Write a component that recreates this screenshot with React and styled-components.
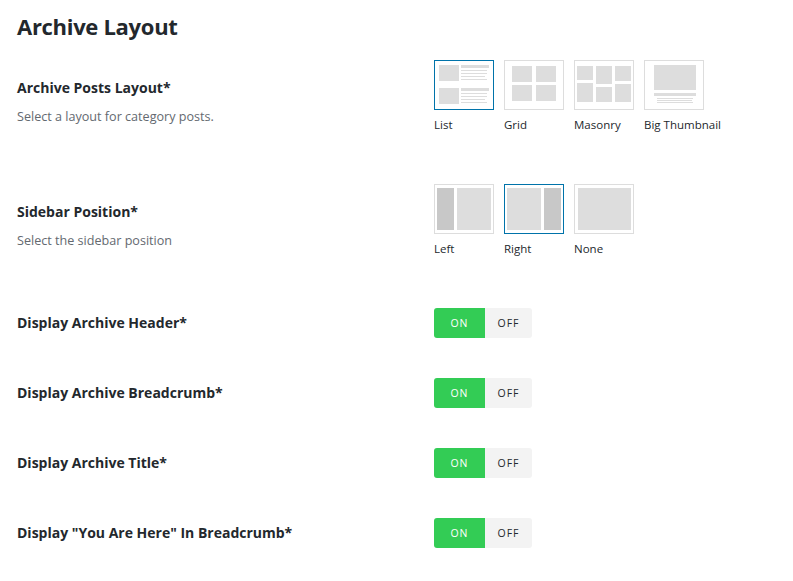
import React from 'react'
import styled, { createGlobalStyle } from 'styled-components'

const GlobalStyle = createGlobalStyle`
  body {
    margin: 0;
    background: #fff;
    font-family: "Open Sans", "Noto Sans", "Liberation Sans", sans-serif;
    color: #23282d;
  }
`

const Page = styled.div`
  padding: 0 17px;
`

const Heading = styled.h1`
  margin: 0;
  padding-top: 13px;
  font-size: 22px;
  line-height: 27px;
  font-weight: 700;
  letter-spacing: -0.3px;
`

const Row = styled.div`
  display: grid;
  grid-template-columns: 417px 1fr;
  align-items: center;
  padding: 20px 0;
  min-height: ${p => p.$height}px;
`

const LabelCol = styled.div`
  display: flex;
  flex-direction: column;
  gap: 10px;
`

const Title = styled.div`
  font-size: 14px;
  font-weight: 700;
  line-height: 20px;
`

const Desc = styled.div`
  font-size: 12.6px;
  line-height: 18px;
  color: #646970;
`

const Options = styled.div`
  display: flex;
  gap: 10px;
  align-self: start;
`

const Option = styled.div`
  display: flex;
  flex-direction: column;
  width: 60px;
`

const Box = styled.div`
  width: 60px;
  height: 50px;
  box-sizing: border-box;
  border: 1px solid ${p => (p.$active ? '#0073aa' : '#dddddd')};
  svg { display: block; }
`

const OptLabel = styled.div`
  margin-top: 6px;
  font-size: 11.5px;
  line-height: 18px;
  white-space: nowrap;
  color: #23282d;
`

const Toggle = styled.div`
  display: inline-flex;
  width: 98px;
  height: 30px;
  border-radius: 3px;
  overflow: hidden;
  justify-self: start;
`

const Seg = styled.div`
  display: flex;
  align-items: center;
  justify-content: center;
  width: ${p => (p.$on ? 51 : 47)}px;
  background: ${p => (p.$on ? '#33cc55' : '#f3f3f3')};
  color: ${p => (p.$on ? '#fff' : '#23282d')};
  font-size: 10.5px;
  letter-spacing: 1px;
  font-weight: 500;
`

const L = '#dddddd'
const D = '#c8c8c8'

const ListIcon = () => (
  <svg width="58" height="48" viewBox="0 0 58 48">
    {[4, 27].map(y => (
      <g key={y} fill={L}>
        <rect x="4" y={y} width="20" height="16" />
        <rect x="26" y={y} width="28" height="3" />
        <rect x="26" y={y + 5} width="26" height="1" />
        <rect x="26" y={y + 8} width="26" height="1" />
        <rect x="26" y={y + 11} width="24" height="1" />
        <rect x="26" y={y + 14} width="26" height="1" />
      </g>
    ))}
  </svg>
)

const GridIcon = () => (
  <svg width="58" height="48" viewBox="0 0 58 48">
    <g fill={L}>
      <rect x="7" y="5" width="20" height="16" />
      <rect x="31" y="5" width="20" height="16" />
      <rect x="7" y="24" width="20" height="16" />
      <rect x="31" y="24" width="20" height="16" />
    </g>
  </svg>
)

const MasonryIcon = () => (
  <svg width="58" height="48" viewBox="0 0 58 48">
    <g fill={L}>
      <rect x="2" y="5" width="16" height="14" />
      <rect x="2" y="22" width="16" height="19" />
      <rect x="21" y="5" width="16" height="18" />
      <rect x="21" y="26" width="16" height="15" />
      <rect x="40" y="5" width="16" height="15" />
      <rect x="40" y="23" width="16" height="18" />
    </g>
  </svg>
)

const BigThumbIcon = () => (
  <svg width="58" height="48" viewBox="0 0 58 48">
    <g fill={L}>
      <rect x="9" y="4" width="42" height="25" />
      <rect x="9" y="32" width="42" height="3" />
      <rect x="12" y="37" width="36" height="1" />
      <rect x="12" y="39" width="35" height="1" />
      <rect x="12" y="41" width="36" height="1" />
    </g>
  </svg>
)

const LeftIcon = () => (
  <svg width="58" height="48" viewBox="0 0 58 48">
    <rect x="2" y="3" width="17" height="42" fill={D} />
    <rect x="22" y="3" width="34" height="42" fill={L} />
  </svg>
)

const RightIcon = () => (
  <svg width="58" height="48" viewBox="0 0 58 48">
    <rect x="2" y="3" width="34" height="42" fill={L} />
    <rect x="39" y="3" width="17" height="42" fill={D} />
  </svg>
)

const NoneIcon = () => (
  <svg width="58" height="48" viewBox="0 0 58 48">
    <rect x="3" y="3" width="53" height="42" fill={L} />
  </svg>
)

const postLayouts = [
  { label: 'List', Icon: ListIcon, active: true },
  { label: 'Grid', Icon: GridIcon },
  { label: 'Masonry', Icon: MasonryIcon },
  { label: 'Big Thumbnail', Icon: BigThumbIcon },
]

const sidebars = [
  { label: 'Left', Icon: LeftIcon },
  { label: 'Right', Icon: RightIcon, active: true },
  { label: 'None', Icon: NoneIcon },
]

const switches = [
  'Display Archive Header*',
  'Display Archive Breadcrumb*',
  'Display Archive Title*',
  'Display "You Are Here" In Breadcrumb*',
]

const ImageRow = ({ title, desc, items }) => (
  <Row $height={84}>
    <LabelCol>
      <Title>{title}</Title>
      <Desc>{desc}</Desc>
    </LabelCol>
    <Options>
      {items.map(({ label, Icon, active }) => (
        <Option key={label}>
          <Box $active={active}>
            <Icon />
          </Box>
          <OptLabel>{label}</OptLabel>
        </Option>
      ))}
    </Options>
  </Row>
)

const App = () => {
  return (
    <Page>
      <GlobalStyle />
      <Heading>Archive Layout</Heading>
      <ImageRow
        title="Archive Posts Layout*"
        desc="Select a layout for category posts."
        items={postLayouts}
      />
      <ImageRow
        title="Sidebar Position*"
        desc="Select the sidebar position"
        items={sidebars}
      />
      {switches.map(s => (
        <Row key={s} $height={30}>
          <Title>{s}</Title>
          <Toggle>
            <Seg $on>ON</Seg>
            <Seg>OFF</Seg>
          </Toggle>
        </Row>
      ))}
    </Page>
  )
}

export default App
